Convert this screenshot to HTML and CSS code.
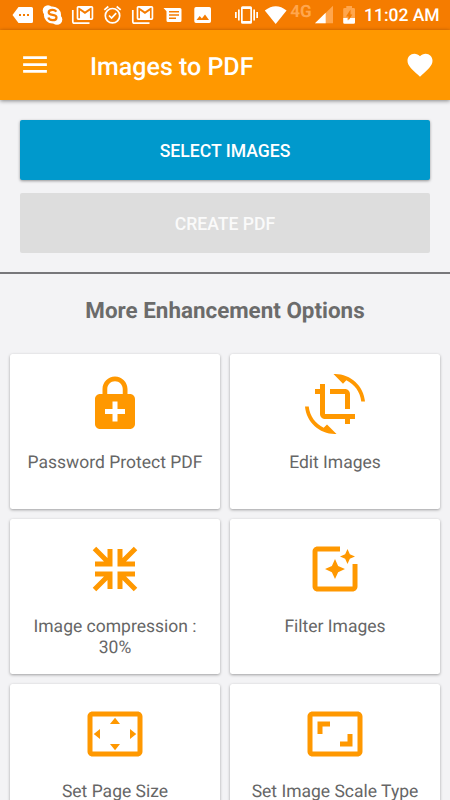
FILE: index.html
```html
<!DOCTYPE html>
<html lang="en">
<head>
<meta charset="utf-8">
<title>Images to PDF</title>
<link rel="stylesheet" href="styles.css">
</head>
<body>
<div class="screen">
  <div class="status">
    <svg class="status-icons" width="450" height="30" viewBox="0 0 450 30" fill="#fff">
      <path d="M18.5 7H31.5Q33 7 33 8.500V21.500Q33 23 31.500 23H18.500L12.500 15ZM19 14v2h2v-2zm4 0v2h2v-2zm4 0v2h2v-2z" fill-rule="evenodd"/>
      <circle cx="52.500" cy="15" r="8.600"/><circle cx="48" cy="10.500" r="5.300"/><circle cx="57" cy="19.500" r="5.300"/>
      <path d="M56.200 11.800C55.500 10.200 54 9.900 52.400 9.900C50 9.900 48.700 11 48.700 12.500C48.700 16.200 56.500 13.600 56.500 17.400C56.500 19.200 54.800 20.200 52.600 20.200C50.400 20.200 48.800 19.300 48.400 17.600" fill="none" stroke="#f57c00" stroke-width="2.200"/>
      <g id="mail"><path d="M72.800 10V21.500Q72.800 23.200 74.500 23.200H89.500" fill="none" stroke="#fff" stroke-width="1.700"/><path transform="translate(75 2.500) scale(.83 .875)" d="M20,18H18V9.250L12,13L6,9.250V18H4V6H5.200L12,10.250L18.800,6H20M20,4H4C2.890,4 2,4.890 2,6V18A2,2 0 0,0 4,20H20A2,2 0 0,0 22,18V6C22,4.890 21.100,4 20,4Z"/></g>
      <use href="#mail" x="60"/>
      <g fill="none" stroke="#fff" stroke-width="1.700"><circle cx="112.500" cy="15.700" r="7.200"/><path d="M104.300 9.800L108.300 6.500M120.700 9.800L116.700 6.500M109 15.500L111.600 18.100L116.200 13.200"/></g>
      <path fill-rule="evenodd" d="M163.500 8H180Q181.500 8 181.500 9.500V20.500Q181.500 22 180 22H168Q166.500 22 166.500 20.500V11.300ZM169 11v1.500h10V11zm0 3.200v1.500h10v-1.500zm0 3.200v1.500h7v-1.500z"/>
      <path fill-rule="evenodd" d="M196 7H209.300Q211 7 211 8.700V21.300Q211 23 209.300 23H196Q194.300 23 194.300 21.300V8.700Q194.300 7 196 7ZM196.500 20H209L205 14.500L201.900 18.500L199.700 16Z"/>
      <path fill-rule="evenodd" d="M242.500 6.300H250.500Q252 6.300 252 7.800V22.200Q252 23.700 250.500 23.700H242.500Q241 23.700 241 22.200V7.800Q241 6.300 242.500 6.300ZM242.700 9V21H250.300V9ZM238 9.500h1.700v11H238zM253.300 9.500H255v11h-1.700zM235 12h1.700v6H235zM256.300 12h1.700v6h-1.700z"/>
      <path d="M264.800 10.500Q275.800 1.900 286.600 10.500L275.700 24Z"/>
      <path d="M333 5.700V23.300H315Z" fill="#ffa64d"/><path d="M325.700 12.800V23.300H315Z"/>
      <path d="M346.300 6v2H344.500Q343.200 8 343.200 9.300V18H355V9.300Q355 8 353.700 8H352V6Z" fill="#ffa64d"/>
      <path d="M343.200 18H347.700V20.500L349 18H355V22.500Q355 23.800 353.700 23.800H344.500Q343.200 23.800 343.200 22.500Z"/>
      <path d="M350.500 9.500L346 16.500H348.500V20.500L352.300 14.500H350.500Z" fill="#f57c00"/>
    </svg>
    <span class="net">4G</span>
    <span class="clock">11:02 AM</span>
  </div>
  <header class="bar">
    <svg class="menu" viewBox="0 0 24 24"><path d="M2.500 18.200h19v-2.200h-19zm0-5.500h19v-2.200h-19zm0-7.700v2.200h19V5z"/></svg>
    <h1>Images to PDF</h1>
    <svg class="heart" viewBox="0 0 24 24"><path d="M12 21.350l-1.450-1.320C5.400 15.360 2 12.280 2 8.500 2 5.420 4.420 3 7.500 3c1.740 0 3.410.81 4.500 2.090C13.090 3.810 14.760 3 16.500 3 19.580 3 22 5.420 22 8.500c0 3.780-3.400 6.860-8.550 11.540L12 21.350z"/></svg>
  </header>
  <section class="actions">
    <button class="btn primary">SELECT IMAGES</button>
    <button class="btn disabled">CREATE PDF</button>
  </section>
  <h2>More Enhancement Options</h2>
  <main class="grid">
    <div class="card"><svg viewBox="0 0 24 24"><path fill-rule="evenodd" d="M18 8h-1V6c0-2.760-2.240-5-5-5S7 3.240 7 6v2H6c-1.100 0-2 .9-2 2v10c0 1.100.9 2 2 2h12c1.100 0 2-.9 2-2V10c0-1.100-.9-2-2-2zM8.900 6c0-1.710 1.390-3.100 3.100-3.100s3.100 1.390 3.100 3.100v2H8.900V6zM16 16h-3v3h-2v-3H8v-2h3v-3h2v3h3v2z"/></svg><p>Password Protect PDF</p></div>
    <div class="card"><svg viewBox="0 0 24 24"><path d="M7.470 21.490C4.200 19.930 1.860 16.760 1.500 13H0c.51 6.160 5.660 11 11.950 11 .23 0 .44-.02.66-.03L8.800 20.150l-1.330 1.340zM12.050 0c-.23 0-.44.02-.66.04l3.810 3.810 1.330-1.330C19.800 4.070 22.140 7.240 22.500 11H24c-.51-6.160-5.660-11-11.950-11zM16 14h2V8c0-1.110-.9-2-2-2h-6v2h6v6zm-8 2V4H6v2H4v2h2v8c0 1.100.89 2 2 2h8v2h2v-2h2v-2H8z"/></svg><p>Edit Images</p></div>
    <div class="card"><svg viewBox="0 0 24 24"><path d="M19.500 3.090L20.910 4.500L16.410 9H20V11H13V4H15V7.590L19.500 3.090M20.910 19.500L19.500 20.910L15 16.410V20H13V13H20V15H16.410L20.910 19.500M4.500 3.090L9 7.590V4H11V11H4V9H7.590L3.090 4.500L4.500 3.090M3.090 19.500L7.590 15H4V13H11V20H9V16.410L4.500 20.910L3.090 19.500Z"/></svg><p>Image compression :<br>30%</p></div>
    <div class="card"><svg viewBox="0 0 24 24"><path d="M19.020 10v9H5V5h9V3H5.020c-1.100 0-2 .9-2 2v14c0 1.100.9 2 2 2H19c1.100 0 2-.9 2-2v-9h-1.980zM17 10l.94-2.060L20 7l-2.060-.94L17 4l-.94 2.060L14 7l2.060.94zM13.250 10.750L12 8l-1.250 2.750L8 12l2.750 1.250L12 16l1.250-2.750L16 12z"/></svg><p>Filter Images</p></div>
    <div class="card"><svg viewBox="0 0 24 24"><path d="M12.010 5.500L10 8h4l-1.990-2.500zM18 10v4l2.500-1.990L18 10zM6 10l-2.500 2.010L6 14v-4zm8 6h-4l2.010 2.500L14 16zm7-13H3c-1.100 0-2 .9-2 2v14c0 1.100.9 2 2 2h18c1.100 0 2-.9 2-2V5c0-1.100-.9-2-2-2zm0 16.010H3V4.990h18v14.020z"/></svg><p>Set Page Size</p></div>
    <div class="card"><svg viewBox="0 0 24 24"><path d="M19 12h-2v3h-3v2h5v-5zM7 9h3V7H5v5h2V9zm14-6H3c-1.100 0-2 .9-2 2v14c0 1.100.9 2 2 2h18c1.100 0 2-.9 2-2V5c0-1.100-.9-2-2-2zm0 16.010H3V4.990h18v14.020z"/></svg><p>Set Image Scale Type</p></div>
  </main>
</div>
</body>
</html>
```
FILE: styles.css
```css
* { box-sizing: border-box; margin: 0; padding: 0; }
body { font-family: Roboto, sans-serif; background: #f3f3f5; overflow: hidden; text-rendering: geometricPrecision; }
.screen { width: 450px; height: 800px; overflow: hidden; }
.status {
  position: relative;
  height: 30px;
  background: #f57c00;
  display: flex;
  justify-content: flex-end;
  padding-right: 10px;
  color: #fff;
}
.status-icons { position: absolute; left: 0; top: 0; }
.net { font-size: 17px; line-height: 24px; font-weight: 700; color: #ffa64d; margin-right: 52.5px; }
.clock { font-size: 17.5px; line-height: 33px; font-weight: 500; width: 76px; white-space: nowrap; }
.bar {
  height: 70px;
  background: #ff9800;
  display: flex;
  align-items: center;
  padding: 0 15px 0 20px;
  box-shadow: 0 1px 4px rgba(0, 0, 0, .45);
  position: relative;
}
.bar svg { width: 30px; height: 30px; fill: #fff; }
.bar h1 { font-size: 25px; font-weight: 500; color: #fff; margin-left: 40px; flex: 1; line-height: 30px; padding-top: 6px; }
.actions {
  display: flex;
  flex-direction: column;
  gap: 12.5px;
  padding: 20px;
  height: 174px;
  border-bottom: 2px solid #77777a;
}
.btn {
  height: 60px;
  flex: none;
  border: 0;
  border-radius: 2px;
  font: 500 17.6px/60px Roboto, sans-serif;
  color: #fff;
  padding-top: 1px;
}
.primary { background: #0099cc; box-shadow: 0 1px 3px rgba(0, 0, 0, .4); }
.disabled { background: #ddd; color: #fafafa; }
h2 { font-size: 22.4px; font-weight: 700; line-height: 30px; text-align: center; color: #6b6b6b; margin: 22px 0 28.3px; }
.grid { display: grid; grid-template-columns: 210px 210px; gap: 10px; padding: 0 10px; grid-auto-rows: 154.8px; }
.card {
  background: #fff;
  border-radius: 2.5px;
  box-shadow: 0 1px 3px rgba(0, 0, 0, .35);
  display: flex;
  flex-direction: column;
  align-items: center;
  padding-top: 20px;
}
.card svg { width: 60px; height: 60px; fill: #ff9800; }
.card p { margin-top: 18.3px; font-size: 17.5px; line-height: 20.5px; color: #666; text-align: center; white-space: nowrap; }
```
